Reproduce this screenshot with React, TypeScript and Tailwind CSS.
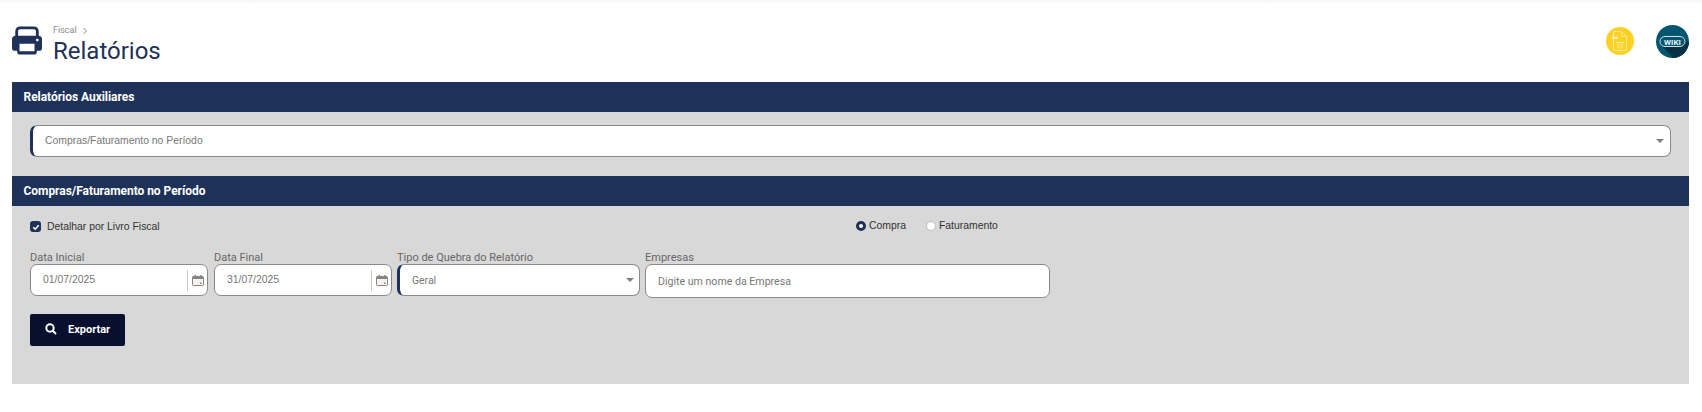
import React from "react";

const roboto = "font-['Roboto',sans-serif]";
const arial = "font-['Liberation_Sans',sans-serif]";

function Printer() {
  return (
    <svg width="30" height="29" viewBox="0 0 32 30" className="text-[#1e3158]">
      <path d="M5 13V5a3.500 3.500 0 0 1 3.500-3.500h15A3.500 3.500 0 0 1 27 5v8" fill="none" stroke="currentColor" strokeWidth="3" />
      <path fillRule="evenodd" fill="currentColor" d="M4 10h24a4 4 0 0 1 4 4v9a3 3 0 0 1-3 3h-2.500v1a3 3 0 0 1-3 3h-15a3 3 0 0 1-3-3v-1H3a3 3 0 0 1-3-3v-9a4 4 0 0 1 4-4zM8 18.500v8h16v-8z" />
      <circle cx="27" cy="14.500" r="1.500" fill="#fff" />
    </svg>
  );
}

function Calendar() {
  return (
    <svg width="12" height="11" viewBox="0 0 12 11" className="text-[#858585]">
      <rect x="0.500" y="1.500" width="11" height="9" rx="1" fill="#f6f3ec" stroke="currentColor" />
      <rect x="0.500" y="1.500" width="11" height="2.500" fill="currentColor" />
      <rect x="2.500" y="0" width="1.500" height="2" fill="currentColor" />
      <rect x="8" y="0" width="1.500" height="2" fill="currentColor" />
      <rect x="8" y="7.500" width="1.500" height="1.500" fill="currentColor" />
    </svg>
  );
}

function Caret() {
  return <div className="w-0 h-0 border-x-[4px] border-x-transparent border-t-[4px] border-t-[#808080]" />;
}

function Bar({ children }: { children: React.ReactNode }) {
  return (
    <div className={`h-[30px] bg-[#1e3158] text-white text-[12px] font-bold flex items-center pl-[11.5px] pb-[1px] tracking-[-0.04px] ${roboto}`}>
      {children}
    </div>
  );
}

function Label({ children }: { children: React.ReactNode }) {
  return <div className={`text-[11px] leading-[16px] text-[#666] h-[14px] ${roboto}`}>{children}</div>;
}

function DateField({ label, value }: { label: string; value: string }) {
  return (
    <div className="w-[178px]">
      <Label>{label}</Label>
      <div className="h-[32px] bg-white border border-[#8a8a8a] rounded-[7px] flex items-center">
        <span className={`flex-1 pl-[12px] text-[10.4px] text-[#777] ${arial}`}>{value}</span>
        <div className="h-[21px] w-px bg-[#ccc]" />
        <div className="w-[19px] flex justify-center pl-[1px]">
          <Calendar />
        </div>
      </div>
    </div>
  );
}

export default function App() {
  return (
    <div className="w-[1702px] h-[412px] bg-white overflow-hidden relative">
      <div className="h-[4px] bg-gradient-to-b from-[#f5f5f5] to-white" />
      <div className="h-[78px] flex pl-[12px] pr-[13px]">
        <div className="pt-[22px] w-[41px]">
          <Printer />
        </div>
        <div className="pt-[21px]">
          <div className={`flex items-center gap-[5px] text-[9px] leading-[11px] text-[#8a8a8a] ${roboto}`}>
            Fiscal
            <svg width="6" height="8" viewBox="0 0 6 8" fill="none" stroke="#8a8a8a" strokeWidth="1">
              <path d="M1.500 1l3 3-3 3" />
            </svg>
          </div>
          <div className={`text-[24px] leading-[31px] text-[#1e3158] ${roboto}`}>Relatórios</div>
        </div>
        <div className="ml-auto flex items-start gap-[22px] pt-[23px]">
          <svg width="28" height="28" viewBox="0 0 28 28">
            <circle cx="14" cy="14" r="14" fill="#fdd023" />
            <path d="M7.500 4.500h8l5 5v14h-13zM15.500 4.500v5h5" fill="none" stroke="#fff1a8" strokeWidth="0.800" />
            <rect x="6" y="9.500" width="6" height="2.500" fill="#fff1a8" />
            <rect x="10" y="15" width="8.500" height="1.200" fill="#fff1a8" />
            <rect x="12" y="18" width="4.500" height="3" fill="none" stroke="#fff1a8" strokeWidth="0.700" />
          </svg>
          <svg width="33" height="33" viewBox="0 0 33 33" className="-mt-[2px]">
            <defs>
              <clipPath id="wikiClip">
                <circle cx="16.500" cy="16.500" r="16.500" />
              </clipPath>
            </defs>
            <circle cx="16.500" cy="16.500" r="16.500" fill="#04556f" />
            <path d="M6 21L28 13L40 24L24 40L16 32z" fill="#033247" clipPath="url(#wikiClip)" />
            <rect x="4" y="11.500" width="25" height="10" rx="5" fill="#04556f" stroke="#cfe0e6" strokeWidth="1" />
            <text x="16.500" y="19.500" textAnchor="middle" fontSize="8" fontWeight="700" fill="#e8f0f2" className="font-['Roboto',sans-serif]">WIKI</text>
          </svg>
        </div>
      </div>
      <div className="mx-[12px] mr-[13px] h-[302px] bg-[#d8d8d8]">
        <Bar>Relatórios Auxiliares</Bar>
        <div className="h-[64px] px-[18px] pt-[13px]">
          <div className="h-[32px] bg-white border border-[#8a8a8a] border-l-[3px] border-l-[#1e3158] rounded-[7px] flex items-center pl-[12px] pr-[6px] justify-between">
            <span className={`text-[10.4px] text-[#777] ${arial}`}>Compras/Faturamento no Período</span>
            <Caret />
          </div>
        </div>
        <Bar>Compras/Faturamento no Período</Bar>
        <div className="px-[18px]">
          <div className="h-[41px] flex items-center relative">
            <div className="w-[11px] h-[11px] rounded-[3px] bg-[#1e3158] flex items-center justify-center">
              <svg width="8" height="8" viewBox="0 0 8 8" fill="none" stroke="#fff" strokeWidth="1.600">
                <path d="M1.200 4.200l2 2 3.500-4" />
              </svg>
            </div>
            <span className={`ml-[6px] text-[10.4px] text-[#333] ${arial}`}>Detalhar por Livro Fiscal</span>
            <div className={`absolute left-[826px] top-[12px] flex items-center text-[10.4px] text-[#333] ${arial}`}>
              <div className="w-[10px] h-[10px] rounded-full border-[3px] border-[#1e3158] bg-white" />
              <span className="ml-[3px]">Compra</span>
              <div className="ml-[20px] w-[10px] h-[10px] rounded-full bg-white border border-[#bdbdbd]" />
              <span className="ml-[3px]">Faturamento</span>
            </div>
          </div>
          <div className="flex items-start gap-[6px] mt-[3px]">
            <DateField label="Data Inicial" value="01/07/2025" />
            <DateField label="Data Final" value="31/07/2025" />
            <div className="w-[243px] -ml-[1px]">
              <Label>Tipo de Quebra do Relatório</Label>
              <div className="h-[32px] bg-white border border-[#8a8a8a] border-l-[3px] border-l-[#1e3158] rounded-[7px] flex items-center pl-[12px] pr-[5px] justify-between">
                <span className={`text-[10.4px] text-[#777] pt-[1px] ${roboto}`}>Geral</span>
                <Caret />
              </div>
            </div>
            <div className="w-[405px] -ml-[1px]">
              <Label>Empresas</Label>
              <div className="h-[34px] bg-white border border-[#8a8a8a] rounded-[7px] flex items-center pl-[12px]">
                <span className={`text-[10.6px] text-[#777] pt-[1px] ${roboto}`}>Digite um nome da Empresa</span>
              </div>
            </div>
          </div>
          <button className={`mt-[16px] w-[95px] h-[32px] bg-[#07112f] rounded-[2px] text-white text-[11px] font-bold flex items-center pl-[15px] ${roboto}`}>
            <svg width="12" height="12" viewBox="0 0 12 12" fill="none" stroke="#fff" strokeWidth="2" className="-mt-[2px]">
              <circle cx="5" cy="5" r="3.700" />
              <path d="M7.800 7.800L11 11" />
            </svg>
            <span className="ml-[11px]">Exportar</span>
          </button>
        </div>
      </div>
    </div>
  );
}
